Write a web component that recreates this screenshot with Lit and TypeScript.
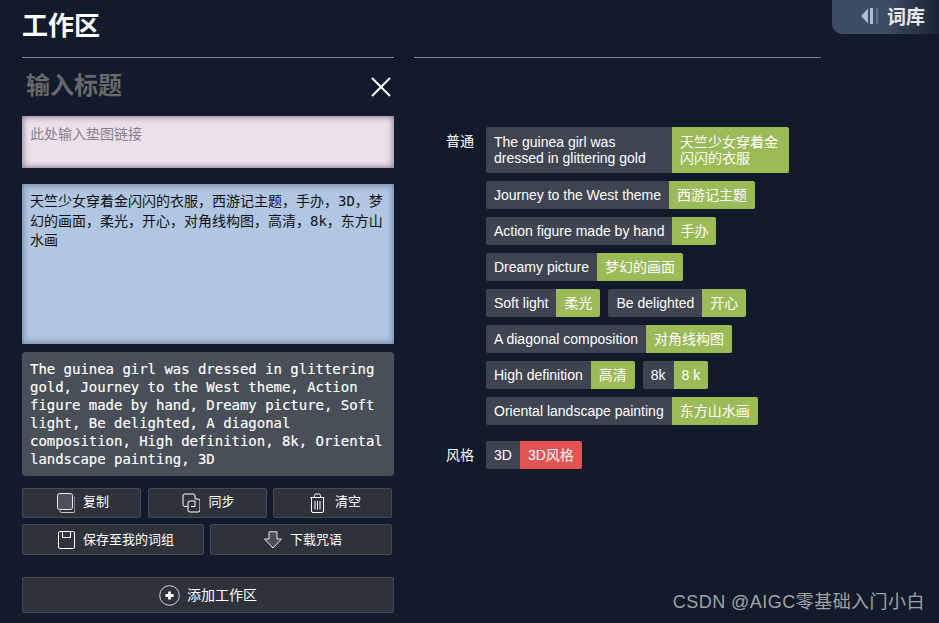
import { LitElement, html, css, svg } from "lit";
import { customElement } from "lit/decorators.js";

const chips: [string, string][] = [
  ["Journey to the West theme", "西游记主题"],
  ["Action figure made by hand", "手办"],
  ["Dreamy picture", "梦幻的画面"],
  ["Soft light", "柔光"],
  ["Be delighted", "开心"],
  ["A diagonal composition", "对角线构图"],
  ["High definition", "高清"],
  ["8k", "8 k"],
  ["Oriental landscape painting", "东方山水画"],
];

/* w = layout box, dx = how far the glyph sits from the box's left edge */
const icon = (w: number, h: number, dx: number, body: unknown) =>
  html`<svg class="ic" width=${w} height=${h} viewBox="${-dx} 0 ${w} ${h}" fill="none" stroke="#fff" stroke-width="1">${body}</svg>`;

const icCopy = icon(21, 20, 3, svg`
  <path d="M3 17.500v.5a1.500 1.500 0 0 0 1.500 1.500h12a1.500 1.500 0 0 0 1.500-1.500V5.500a1.500 1.500 0 0 0-1-1.400" stroke="#c9cbd0"/>
  <rect x="0.500" y="0.500" width="15" height="16" rx="2" fill="#4b505c" stroke="#e8e9eb"/>`);
const icSync = icon(21, 20, 3, svg`
  <path d="M5.500 13.500H3a2 2 0 0 1-2-2V3a2 2 0 0 1 2-2h8a2 2 0 0 1 2 2v3"/>
  <path d="M13 6h3a2 2 0 0 1 2 2v9a2 2 0 0 1-2 2H8a2 2 0 0 1-2-2V10a2 2 0 0 1 2-2h5v5.500H9"/>`);
const icTrash = icon(23, 20, 6, svg`
  <path d="M.5 4.500h14M4.500 4.500V2.500a1.500 1.500 0 0 1 1.500-1.500h3a1.500 1.500 0 0 1 1.500 1.500v2"/>
  <path d="M1.500 4.500V18a1.500 1.500 0 0 0 1.500 1.500h9a1.500 1.500 0 0 0 1.500-1.500V4.500"/>
  <path d="M5 8v8.500M7.500 8v8.500M10 8v8.500"/>`);
const icSave = icon(23, 18, 6, svg`
  <path d="M2 .5h13A1.500 1.500 0 0 1 16.500 2v14a1.500 1.500 0 0 1-1.500 1.500H2A1.500 1.500 0 0 1 .5 16V2A1.500 1.500 0 0 1 2 .5z"/>
  <path d="M4.500 .5v6h8v-6"/>`);
const icDown = icon(22, 18, 4, svg`
  <path d="M5 .8h8v7.200h4.500L9 17 .5 8H5z" fill="#4a4f5a" stroke="#e4e5e8"/>`);
const icAdd = icon(21, 21, 0, svg`
  <circle cx="10.500" cy="10.500" r="9.800" stroke="#d8d9dc"/>
  <path d="M10.500 6.500v8M6.500 10.500h8" stroke-width="2.800"/>`);

@customElement("app-root")
export class AppRoot extends LitElement {
  static styles = css`
    :host {
      display: block;
      position: relative;
      height: 623px;
      overflow: hidden;
      background: #111b2b;
      color: #fff;
      font-family: "Liberation Sans", "Noto Sans CJK SC", sans-serif;
      font-size: 14px;
    }
    .cols { display: flex; gap: 20px; padding-left: 22px; }
    .left { width: 372px; flex: none; }
    .right { width: 407px; flex: none; }
    .head-space { height: 58px; box-sizing: border-box; border-bottom: 1px solid #7c828a; }
    h1 {
      margin: 0;
      height: 58px;
      box-sizing: border-box;
      border-bottom: 1px solid #7c828a;
      font-size: 26px;
      line-height: 52px;
      font-weight: 700;
    }
    .title-row {
      height: 58px;
      box-sizing: border-box;
      display: flex;
      align-items: center;
      justify-content: space-between;
      padding: 0 3px 2px 4px;
    }
    .title { font-size: 24px; line-height: 32px; font-weight: 700; color: #67696a; }
    .close { display: block; margin-top: 1px; }
    .field {
      display: block;
      width: 100%;
      box-sizing: border-box;
      border: 0;
      margin: 0;
      padding: 8px;
      resize: none;
      overflow: hidden;
      outline: none;
      font-family: "DejaVu Sans Mono", "Noto Sans CJK SC", monospace;
      font-size: 14px;
      color: #111;
    }
    .link {
      height: 52px;
      background: #ede0ea;
      box-shadow: inset 0 0 6px 1px #7f7a8a;
      line-height: 20px;
      margin-bottom: 16px;
    }
    .link::placeholder { color: #85808a; }
    .zh {
      height: 160px;
      background: #b0c6e2;
      box-shadow: inset 0 0 6px 1px #6f7f9c;
      line-height: 19.500px;
      margin-bottom: 8px;
    }
    .en {
      height: 124px;
      box-sizing: border-box;
      padding: 8px;
      margin-bottom: 12px;
      background: #484f58;
      border-radius: 4px;
      font-family: "DejaVu Sans Mono", monospace;
      font-size: 14px;
      letter-spacing: -0.03px;
      -webkit-text-stroke: 0.15px #fff;
      line-height: 18px;
      color: #fff;
    }
    .btns { display: flex; gap: 6.500px; width: 370px; margin-bottom: 6px; }
    .btns.two { gap: 6px; }
    button {
      flex: 1 1 0;
      display: flex;
      align-items: center;
      justify-content: center;
      gap: 8px;
      box-sizing: border-box;
      height: 30px;
      padding: 0;
      background: #2e323b;
      border: 1px solid #444952;
      border-radius: 2px;
      color: #fff;
      font-family: inherit;
      font-size: 13px;
    }
    button b { font-weight: 400; line-height: 16px; margin-bottom: 2px; }
    .btns.two button { height: 31px; }
    .btns.two button b { margin-bottom: 0; }
    button.add {
      width: 372px;
      height: 36px;
      margin-top: 22px;
      font-size: 14px;
      gap: 7px;
    }
    button.add b { margin-bottom: 1px; }
    .ic { display: block; flex: none; }
    .groups { padding: 69px 0 0 32px; display: flex; flex-direction: column; gap: 16px; }
    .group { display: flex; align-items: flex-start; }
    .label { width: 40px; flex: none; line-height: 28px; }
    .list { width: 310px; display: flex; flex-wrap: wrap; gap: 8px; }
    .chip {
      display: flex;
      border-radius: 2px;
      overflow: hidden;
      line-height: 16px;
    }
    .chip span { padding: 6px 8px; }
    .chip .a { background: #3f4451; }
    .chip .b { background: #9bba58; }
    .chip .r { background: #e25353; }
    .chip .w1 { width: 170px; padding-top: 7px; padding-bottom: 7px; }
    .chip .w2 { width: 101px; padding-top: 7px; padding-bottom: 7px; }
    .tab {
      position: absolute;
      top: 0;
      right: 0;
      width: 107px;
      height: 34px;
      box-sizing: border-box;
      padding: 0 0 3px 28px;
      display: flex;
      align-items: center;
      gap: 7px;
      border-bottom-left-radius: 10px;
      background: linear-gradient(90deg, #3e4c63 0%, #3e4c63 50%, #1a2433 100%);
      font-size: 19px;
      font-weight: 700;
      color: #e8e9ec;
    }
    .mark {
      position: absolute;
      right: 14px;
      bottom: 9px;
      font-size: 18px;
      letter-spacing: 0.47px;
      line-height: 24px;
      color: #a0a3a6;
    }
  `;

  render() {
    return html`
      <div class="cols">
        <section class="left">
          <h1>工作区</h1>
          <div class="title-row">
            <span class="title">输入标题</span>
            <svg class="close" width="20" height="20" viewBox="0 0 20 20" stroke="#fff" stroke-width="2"><path d="M1 1l18 18M19 1L1 19"/></svg>
          </div>
          <textarea class="field link" placeholder="此处输入垫图链接"></textarea>
          <textarea class="field zh" .value=${"天竺少女穿着金闪闪的衣服，西游记主题，手办，3D，梦幻的画面，柔光，开心，对角线构图，高清，8k，东方山水画"}></textarea>
          <div class="en">The guinea girl was dressed in glittering gold, Journey to the West theme, Action figure made by hand, Dreamy picture, Soft light, Be delighted, A diagonal composition, High definition, 8k, Oriental landscape painting, 3D</div>
          <div class="btns">
            <button>${icCopy}<b>复制</b></button>
            <button>${icSync}<b>同步</b></button>
            <button>${icTrash}<b>清空</b></button>
          </div>
          <div class="btns two">
            <button>${icSave}<b>保存至我的词组</b></button>
            <button>${icDown}<b>下载咒语</b></button>
          </div>
          <button class="add">${icAdd}<b>添加工作区</b></button>
        </section>
        <section class="right">
          <div class="head-space"></div>
          <div class="groups">
            <div class="group">
              <div class="label">普通</div>
              <div class="list">
                <div class="chip"><span class="a w1">The guinea girl was dressed in glittering gold</span><span class="b w2">天竺少女穿着金闪闪的衣服</span></div>
                ${chips.map(([a, b]) => html`<div class="chip"><span class="a">${a}</span><span class="b">${b}</span></div>`)}
              </div>
            </div>
            <div class="group">
              <div class="label">风格</div>
              <div class="list">
                <div class="chip"><span class="a">3D</span><span class="r">3D风格</span></div>
              </div>
            </div>
          </div>
        </section>
      </div>
      <div class="tab">
        <svg class="ic" width="20" height="18" viewBox="0 0 20 18"><path d="M1 9L8 1.500V16.500z" fill="#a9bdd6"/><rect x="10" y="1" width="3" height="16" fill="#a9bdd6"/><rect x="16" y="1" width="2" height="16" fill="#5f708a"/></svg>
        词库
      </div>
      <div class="mark">CSDN @AIGC零基础入门小白</div>
    `;
  }
}
